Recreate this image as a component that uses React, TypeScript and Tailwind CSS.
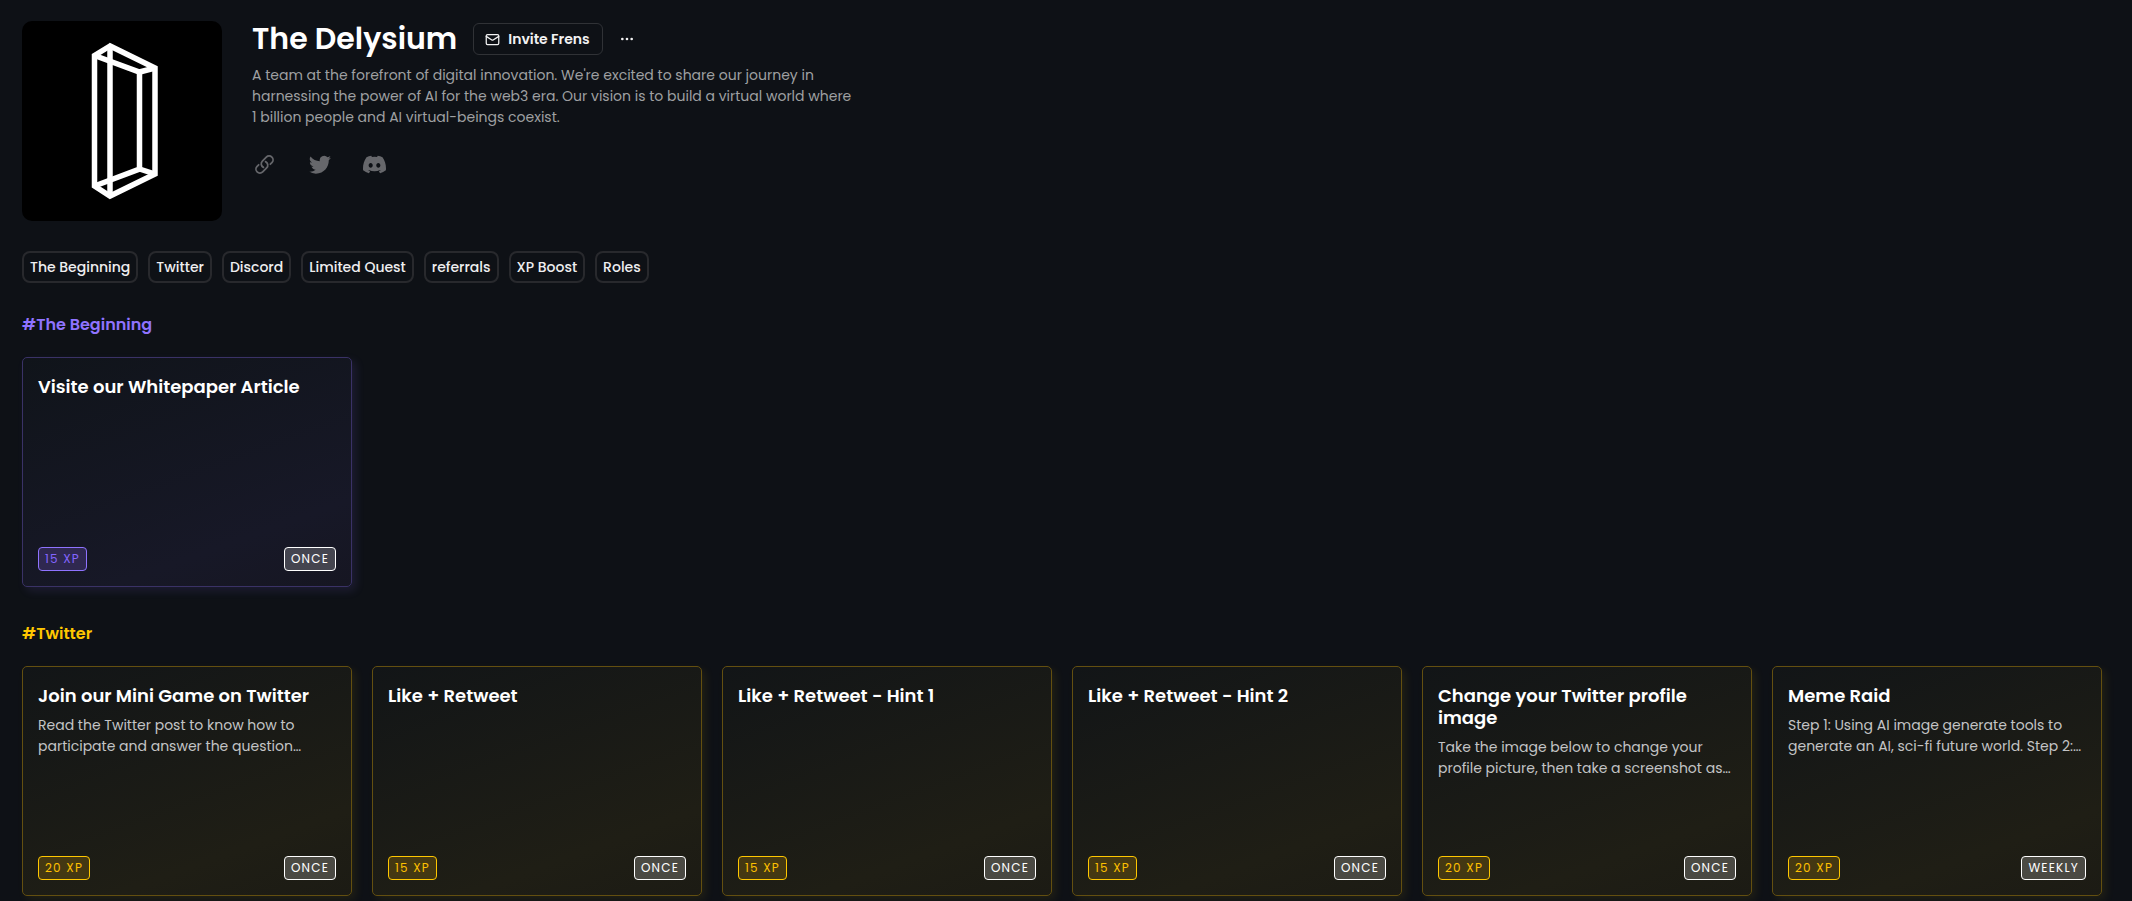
import { LuMail } from "react-icons/lu";
import { HiOutlineDotsHorizontal } from "react-icons/hi";
import { HiOutlineLink } from "react-icons/hi2";
import { BsTwitter, BsDiscord } from "react-icons/bs";

type Theme = "purple" | "yellow";

interface Quest {
  title: string;
  description?: string;
  xp: number;
  recurrence: string;
}

interface Section {
  name: string;
  theme: Theme;
  quests: Quest[];
}

const tags = [
  "The Beginning",
  "Twitter",
  "Discord",
  "Limited Quest",
  "referrals",
  "XP Boost",
  "Roles",
];

const sections: Section[] = [
  {
    name: "The Beginning",
    theme: "purple",
    quests: [
      { title: "Visite our Whitepaper Article", xp: 15, recurrence: "once" },
    ],
  },
  {
    name: "Twitter",
    theme: "yellow",
    quests: [
      {
        title: "Join our Mini Game on Twitter",
        description:
          "Read the Twitter post to know how to participate and answer the question…",
        xp: 20,
        recurrence: "once",
      },
      { title: "Like + Retweet", xp: 15, recurrence: "once" },
      { title: "Like + Retweet - Hint 1", xp: 15, recurrence: "once" },
      { title: "Like + Retweet - Hint 2", xp: 15, recurrence: "once" },
      {
        title: "Change your Twitter profile image",
        description:
          "Take the image below to change your profile picture, then take a screenshot as…",
        xp: 20,
        recurrence: "once",
      },
      {
        title: "Meme Raid",
        description:
          "Step 1: Using AI image generate tools to generate an AI, sci-fi future world. Step 2:…",
        xp: 20,
        recurrence: "weekly",
      },
    ],
  },
];

const themes = {
  purple: {
    heading: "text-[#8f73ff]",
    card: "border-[#3a3266] bg-linear-160 from-[#10141a] via-[#171827] via-75% to-[#161622] shadow-[4px_4px_10px_rgba(143,115,255,0.12)]",
    badge: "border-[#8f73ff] bg-[#2f2850] text-[#8465ff]",
  },
  yellow: {
    heading: "text-[#ffc700]",
    card: "border-[#634f10] bg-linear-160 from-[#121517] via-[#1f1e15] via-75% to-[#1c1b14] shadow-[4px_4px_10px_rgba(255,199,0,0.08)]",
    badge: "border-[#ffc700] bg-[#443812] text-[#ffc100]",
  },
};

const Logo = () => (
  <div className="w-[200px] h-[200px] shrink-0 rounded-[10px] bg-black">
    <svg
      viewBox="0 0 200 200"
      fill="none"
      stroke="white"
      strokeWidth="5.5"
      aria-label="The Delysium"
    >
      <path d="M88 25 L72.5 34.5 V165 L88 175 L133 153 V47 Z" />
      <path d="M88 25 V175" />
      <path d="M72.5 34.5 L117.5 51 L133 47" />
      <path d="M117.5 51 V148 L72.5 165" />
      <path d="M117.5 148 L133 153" />
    </svg>
  </div>
);

const QuestCard = ({ quest, theme }: { quest: Quest; theme: Theme }) => (
  <article
    className={`flex flex-col justify-between min-h-[230px] rounded-[5px] border px-[15px] pt-[18px] pb-[15px] ${themes[theme].card}`}
  >
    <div className="flex flex-col gap-2">
      <h3 className="text-[18px] leading-[22px] font-semibold text-white">
        {quest.title}
      </h3>
      {quest.description && (
        <p className="text-[14px] leading-[21px] text-[#c3c4c5]">
          {quest.description}
        </p>
      )}
    </div>
    <div className="flex justify-between text-[12px] leading-[22px] tracking-widest uppercase">
      <span className={`rounded border px-[6px] ${themes[theme].badge}`}>
        {quest.xp} XP
      </span>
      <span className="rounded border border-white bg-white/20 px-[6px] text-white">
        {quest.recurrence}
      </span>
    </div>
  </article>
);

export default function App() {
  return (
    <main className="min-h-screen bg-[#0e1116] pl-[22px] pr-[30px] pt-[21px] pb-1 font-['Poppins','Inter',sans-serif]">
      <header className="flex gap-[30px]">
        <Logo />
        <div className="flex flex-col">
          <div className="flex items-center h-9">
            <h1 className="text-[30px] leading-9 font-semibold text-white">
              The Delysium
            </h1>
            <button className="flex items-center gap-2 h-8 ml-4 pl-[11px] pr-3 rounded-md border border-[#303236] text-[14px] font-semibold text-[#f2f2f3]">
              <LuMail className="w-[15px] h-[15px]" />
              Invite Frens
            </button>
            <button aria-label="More" className="ml-4 text-[#f2f2f3]">
              <HiOutlineDotsHorizontal className="w-4 h-4" />
            </button>
          </div>
          <p className="mt-2 max-w-[600px] text-[14px] leading-[21px] text-[#9fa0a2]">
            A team at the forefront of digital innovation. We're excited to
            share our journey in harnessing the power of AI for the web3 era.
            Our vision is to build a virtual world where 1 billion people and AI
            virtual-beings coexist.
          </p>
          <nav className="flex items-center gap-[30px] h-6 mt-6 text-[#66676b]">
            <a
              href="#website"
              aria-label="Website"
              className="flex justify-center w-[25px]"
            >
              <HiOutlineLink className="w-[21px] h-[21px] stroke-2" />
            </a>
            <a
              href="#twitter"
              aria-label="Twitter"
              className="flex justify-center w-[25px]"
            >
              <BsTwitter className="w-[22px] h-[22px]" />
            </a>
            <a
              href="#discord"
              aria-label="Discord"
              className="flex justify-center w-[25px]"
            >
              <BsDiscord className="w-[23px] h-[23px]" />
            </a>
          </nav>
        </div>
      </header>

      <div className="flex flex-wrap gap-[10px] mt-[30px]">
        {tags.map((tag) => (
          <button
            key={tag}
            className="h-8 px-[6px] rounded-lg border-2 border-[#28292d] text-[14px] font-medium text-[#eeeef0]"
          >
            {tag}
          </button>
        ))}
      </div>

      {sections.map((section) => (
        <section key={section.name} className="mt-[30px] mb-[35px]">
          <h2
            className={`text-[16px] leading-6 font-semibold ${themes[section.theme].heading}`}
          >
            #{section.name}
          </h2>
          <div className="grid grid-cols-2 lg:grid-cols-4 2xl:grid-cols-6 gap-5 mt-5">
            {section.quests.map((quest) => (
              <QuestCard
                key={quest.title}
                quest={quest}
                theme={section.theme}
              />
            ))}
          </div>
        </section>
      ))}
    </main>
  );
}
